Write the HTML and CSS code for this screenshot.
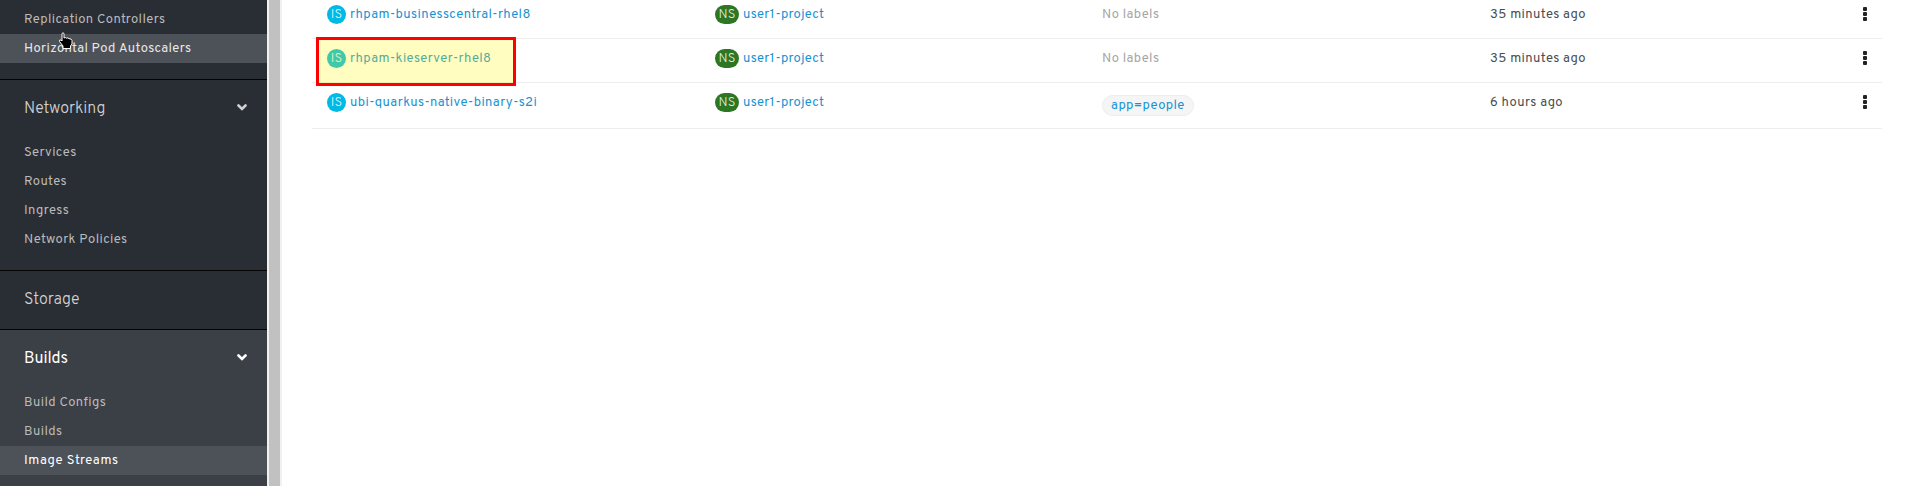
FILE: index.html
```html
<!DOCTYPE html>
<html lang="en">
<head>
<meta charset="utf-8">
<title>Image Streams</title>
<link rel="stylesheet" href="styles.css">
</head>
<body>
<div class="app">
  <nav class="sidebar">
    <section class="section section-first">
      <a class="item">Replication Controllers</a>
      <a class="item item-hover">Horizontal Pod Autoscalers</a>
    </section>
    <section class="section">
      <h2 class="head"><span>Networking</span><svg class="chevron" viewBox="0 0 10 7"><path d="M1.5 1.5 5 5 8.5 1.5"/></svg></h2>
      <a class="item">Services</a>
      <a class="item">Routes</a>
      <a class="item">Ingress</a>
      <a class="item">Network Policies</a>
    </section>
    <section class="section section-closed">
      <h2 class="head"><span>Storage</span></h2>
    </section>
    <section class="section section-active">
      <h2 class="head"><span>Builds</span><svg class="chevron" viewBox="0 0 10 7"><path d="M1.5 1.5 5 5 8.5 1.5"/></svg></h2>
      <a class="item">Build Configs</a>
      <a class="item">Builds</a>
      <a class="item item-current">Image Streams</a>
    </section>
    <svg class="cursor" viewBox="0 0 16 18"><path d="M4 1.500Q5 0 6 1.500V6Q7.500 5 8.500 6.200 10 5.300 11 6.700 13.500 6.500 14 8.500V12L12.500 14V16.500H5V14L1.500 9.500Q1 7.500 3 8L4 9Z"/></svg>
  </nav>
  <div class="scrollbar"></div>
  <main class="list">
    <div class="row row-first">
      <div class="cell"><span class="badge is">IS</span><a class="link">rhpam-businesscentral-rhel8</a></div>
      <div class="cell"><span class="badge ns">NS</span><a class="link link-ns">user1-project</a></div>
      <div class="cell muted">No labels</div>
      <div class="cell">35 minutes ago</div>
      <svg class="kebab" viewBox="0 0 4 14"><rect width="4" height="4" rx="1"/><rect y="5" width="4" height="4" rx="1"/><rect y="10" width="4" height="4" rx="1"/></svg>
    </div>
    <div class="row">
      <div class="cell"><span class="badge is">IS</span><a class="link">rhpam-kieserver-rhel8</a></div>
      <div class="cell"><span class="badge ns">NS</span><a class="link link-ns">user1-project</a></div>
      <div class="cell muted">No labels</div>
      <div class="cell">35 minutes ago</div>
      <svg class="kebab" viewBox="0 0 4 14"><rect width="4" height="4" rx="1"/><rect y="5" width="4" height="4" rx="1"/><rect y="10" width="4" height="4" rx="1"/></svg>
      <div class="highlight"></div>
    </div>
    <div class="row row-last">
      <div class="cell"><span class="badge is">IS</span><a class="link">ubi-quarkus-native-binary-s2i</a></div>
      <div class="cell"><span class="badge ns">NS</span><a class="link link-ns">user1-project</a></div>
      <div class="cell"><a class="tag">app=people</a></div>
      <div class="cell">6 hours ago</div>
      <svg class="kebab" viewBox="0 0 4 14"><rect width="4" height="4" rx="1"/><rect y="5" width="4" height="4" rx="1"/><rect y="10" width="4" height="4" rx="1"/></svg>
    </div>
  </main>
</div>
</body>
</html>
```
FILE: styles.css
```css
* { box-sizing: border-box; }
body { margin: 0; background: #fff; font: 13px/19px Overpass, Roboto, "Open Sans", sans-serif; color: #484d52; overflow: hidden; }
.app { display: flex; height: 486px; }
.sidebar { position: relative; width: 267px; flex: none; background: #292e34; overflow: hidden; }
.section { padding-bottom: 16px; border-bottom: 1px solid #030303; }
.section-first { padding-top: 5px; }
.section-closed { padding-bottom: 0; }
.section-active { background: #3b3f46; height: 160px; }
.head { display: flex; align-items: center; justify-content: space-between; height: 58px; margin: 0; padding: 0 20px 3px 24px; font-size: 16px; font-weight: 300; letter-spacing: -.05px; color: #d1d1d1; }
.head span { padding-top: 4px; }
.section-active .head { color: #fff; font-weight: 400; letter-spacing: -.05px; }
.chevron { width: 10px; height: 7px; fill: none; stroke: currentColor; stroke-width: 2.6; stroke-linecap: round; }
.item { display: block; height: 29px; padding-left: 24px; line-height: 30px; letter-spacing: .41px; color: #bbb; }
.item-hover { background: #4d5258; color: #e8e8e8; letter-spacing: .38px; }
.item-current { background: #4d5258; color: #fff; letter-spacing: .6px; }
.cursor { position: absolute; left: 58px; top: 32px; width: 16px; height: 18px; fill: #000; stroke: #fff; stroke-width: 1; }
.scrollbar { width: 15px; flex: none; background: #c1c1c1; border: solid #f1f1f1; border-width: 0 2px; }
.list { flex: 1; padding: 0 27px 0 30px; }
.row { position: relative; display: grid; grid-template-columns: 388px 387px 388px 1fr 19px; align-items: start; height: 44px; padding: 10px 0 0 15px; border-bottom: 1px solid #ededed; }
.row-first { height: 39px; padding-top: 5px; }
.row-last { height: 46px; }
.cell { display: flex; gap: 4px; line-height: 21px; letter-spacing: .4px; }
.badge { height: 19px; flex: none; border-radius: 10px; color: rgba(255,255,255,.85); text-align: center; font-weight: 300; letter-spacing: 0; line-height: 20px; }
.is { width: 19px; background: #00b9e4; }
.ns { width: 24px; background: #2d7623; }
.link, .tag { color: #1593d3; line-height: 20px; }
.link-ns { letter-spacing: .32px; }
.muted { color: #a5a5a5; }
.tag { height: 21px; margin-top: 2px; padding: 0 8px; line-height: 20px; border: 1px solid #ededed; border-radius: 11px; background: #f5f5f5; }
.kebab { width: 4px; height: 14px; margin-top: 2px; fill: #222; }
.highlight { position: absolute; left: 4px; top: -2px; width: 200px; height: 49px; border: 3px solid #f00; background: rgba(255,247,0,.25); z-index: 1; }
```
